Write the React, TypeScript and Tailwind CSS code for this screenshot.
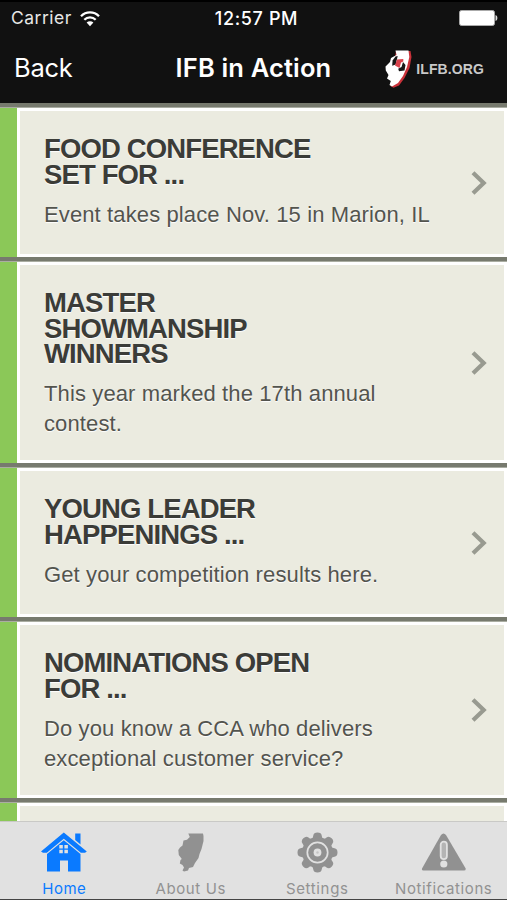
import React from 'react';

type Story = {
    lines: string[];
    body: string[];
    height: string;
};

const stories: Story[] = [
    { lines: ['FOOD CONFERENCE', 'SET FOR ...'], body: ['Event takes place Nov. 15 in Marion, IL'], height: 'h-[154px]' },
    { lines: ['MASTER', 'SHOWMANSHIP', 'WINNERS'], body: ['This year marked the 17th annual', 'contest.'], height: 'h-[206px]' },
    { lines: ['YOUNG LEADER', 'HAPPENINGS ...'], body: ['Get your competition results here.'], height: 'h-[154px]' },
    { lines: ['NOMINATIONS OPEN', 'FOR ...'], body: ['Do you know a CCA who delivers', 'exceptional customer service?'], height: 'h-[181px]' },
    { lines: [], body: [], height: 'h-[154px]' },
];

const WifiIcon = () => (
    <svg width="20" height="16" viewBox="0 0 20 16" fill="none" stroke="#fff" strokeWidth="2.3">
        <path d="M1 5.2C6 0.2 14 0.2 19 5.2" />
        <path d="M4.3 8.7C7.5 5.5 12.5 5.5 15.7 8.7" />
        <path d="M10 15.2L6.6 11.6C8.5 9.9 11.5 9.9 13.4 11.6Z" fill="#fff" stroke="none" />
    </svg>
);

const BatteryIcon = () => (
    <svg width="39" height="16" viewBox="0 0 39 16">
        <rect x="0.5" y="0.5" width="35" height="15" rx="2" fill="#fff" stroke="#aaa" />
        <path d="M36.5 5C39 5.5 39 10.5 36.5 11Z" fill="#ddd" />
    </svg>
);

const LogoIcon = () => (
    <svg width="27" height="38" viewBox="0 0 27 38">
        <path d="M11 1H25.5L26.5 7L24.5 18L19.5 28L14 35.5L8.5 37.8L5.5 36Z" fill="#c9323a" />
        <path d="M10.5 0.5H23.5L24.3 7L22 17L18 26L13 33L7 36.5L4.5 35L5.8 31L2 28.5L3.5 25L0.8 20.5L0.5 16.5L5 12L6 8L11.5 5Z" fill="#fff" />
        <path d="M10.5 6.5L12.7 6L10.7 14.5L7.2 15.8L7.6 10.5Z" fill="#181818" />
        <path d="M12 9.5L18.3 9L18.3 11.5L16 12.5L14.5 18L10 15.5Z" fill="#d9404a" />
        <path d="M18 12L20.5 15L19.5 20.5L14 21.3L13.2 18.8L16.5 17Z" fill="#181818" />
    </svg>
);

const HomeIcon = () => (
    <svg width="46" height="40" viewBox="0 0 46 40" fill="#0a7aff">
        <path d="M34.2 1.5H39.5V12.5L34.2 8Z" />
        <path d="M22.8 0.5L45.8 19.5L44 20.8H39.8L22.8 6.7L5.8 20.8H2L0 19.5Z" />
        <path fillRule="evenodd" d="M22.8 8.2L39.5 22V39.5H27V28.5H19V39.5H6V22ZM18.3 13V16.5H21.8V13ZM23.4 13V16.5H26.9V13ZM18.3 17.8V21.3H21.8V17.8ZM23.4 17.8V21.3H26.9V17.8Z" />
    </svg>
);

const StateIcon = () => (
    <svg width="26" height="39" viewBox="0 0 26 39" fill="#919191">
        <path d="M10.3 0.5H25L25.5 3L25.5 8L23.5 16L21.5 21L20.5 25L17 30L15 34L11 35L10 37.5L6 38.5L4.5 37.5L6 34.5L4.5 32L1.8 30.5L2.5 27L3.8 26L0.8 22L0.3 17L2 14.5L4.5 12.5L5.5 7.5L9 6.8L11.8 4Z" />
    </svg>
);

const GearIcon = () => (
    <svg width="41" height="41" viewBox="-20.5 -20.5 41 41" fill="#919191">
        <circle r="15.2" />
        {[0, 45, 90, 135, 180, 225, 270, 315].map((angle) => (
            <path key={angle} transform={`rotate(${angle})`} d="M-6 -13.5Q-4.2 -15 -4.2 -17Q-3.9 -20 0 -20Q3.9 -20 4.2 -17Q4.2 -15 6 -13.5Z" />
        ))}
        <circle r="10.2" fill="none" stroke="#e1e1e1" strokeWidth="1.7" />
        <circle r="3.9" fill="#e1e1e1" />
        <circle r="1.2" fill="#c4c4c4" />
    </svg>
);

const AlertIcon = () => (
    <svg width="46" height="38" viewBox="0 0 46 38">
        <path d="M20 2Q22.5 -1 25 2L44.7 35.5Q45 37.5 43 37.5H2.5Q0.5 37.5 1 35.5Z" fill="#919191" />
        <rect x="19.7" y="8.7" width="6.2" height="17.5" rx="3.1" fill="#b4b4b4" stroke="#e1e1e1" strokeWidth="1.8" />
        <circle cx="22.8" cy="31" r="3.6" fill="#e1e1e1" />
    </svg>
);

const tabs = [
    { label: 'Home', icon: <HomeIcon />, color: 'text-[#0a7aff]', spacing: 'tracking-[0.5px]' },
    { label: 'About Us', icon: <StateIcon />, color: 'text-[#929292]', spacing: 'tracking-[0.6px]' },
    { label: 'Settings', icon: <GearIcon />, color: 'text-[#929292]', spacing: 'tracking-[0.65px]' },
    { label: 'Notifications', icon: <AlertIcon />, color: 'text-[#929292]', spacing: 'tracking-[0.6px]' },
];

const StoryRow: React.FC<{ story: Story }> = ({ story }) => (
    <div className={`flex shrink-0 flex-col border-t-4 border-[#777a6e] ${story.height}`}>
        <div className="h-px shrink-0 bg-[#aaada2]" />
        <div className="flex min-h-0 flex-1">
            <div className="w-[17px] shrink-0 bg-[#8bc858]" />
            <div className="flex flex-1 items-center border-[3px] border-white bg-[#ebebe0] pr-[17px]">
                <div className="flex-1 self-start pt-[25px] pl-6 whitespace-nowrap [text-shadow:0_1px_1px_#fff]">
                    <h2 className="text-[27.5px] leading-[25.5px] font-bold tracking-[-0.87px] text-[#3b3c38]">
                        {story.lines.map((line) => (
                            <span key={line} className="block">{line}</span>
                        ))}
                    </h2>
                    <p className="mt-[12.5px] text-[22px] leading-[30px] tracking-[0.12px] text-[#53544e]">
                        {story.body.map((line) => (
                            <span key={line} className="block">{line}</span>
                        ))}
                    </p>
                </div>
                <svg className="shrink-0" width="16" height="24" viewBox="0 0 16 24" fill="none" stroke="#989a90" strokeWidth="4.2">
                    <path d="M2 1.7L12.7 12L2 22.3" />
                </svg>
            </div>
        </div>
    </div>
);

export default function App() {
    return (
        <div className="flex h-[900px] w-[507px] flex-col overflow-hidden border-t-2 border-b border-t-black border-b-[#444] bg-[#111] font-['Liberation_Sans',sans-serif]">
            <header className="h-[101px] shrink-0 font-[Inter,sans-serif] whitespace-nowrap text-white">
                <div className="grid h-8 grid-cols-3 items-center pr-[9px] pl-[11px]">
                    <div className="flex items-center gap-2 pt-px text-[17.5px] text-[#e8e8e8]">
                        <span className="tracking-[0.5px]">Carrier</span>
                        <WifiIcon />
                    </div>
                    <span className="justify-self-center pl-1 text-[18px] font-medium tracking-[0.65px]">12:57 PM</span>
                    <div className="flex justify-end">
                        <BatteryIcon />
                    </div>
                </div>
                <div className="grid h-[69px] grid-cols-3 items-center pr-[23px] pl-[14px]">
                    <span className="text-[25.5px] tracking-[-0.25px]">Back</span>
                    <h1 className="justify-self-center pl-[9px] text-[25.5px] font-semibold tracking-[0.15px]">IFB in Action</h1>
                    <div className="flex items-center justify-end gap-1">
                        <LogoIcon />
                        <span className="pt-0.5 font-['Liberation_Sans',sans-serif] text-[14px] font-bold tracking-[0.1px] text-[#c9c9c9]">ILFB.ORG</span>
                    </div>
                </div>
            </header>
            <main className="flex min-h-0 flex-1 flex-col overflow-hidden">
                {stories.map((story, i) => (
                    <StoryRow key={i} story={story} />
                ))}
            </main>
            <nav className="grid h-[78px] shrink-0 grid-cols-4 border-t border-[#c9c9c6] bg-[#e1e1e1] pl-px font-[Inter,sans-serif]">
                {tabs.map((tab) => (
                    <div key={tab.label} className={`flex flex-col items-center ${tab.color}`}>
                        <div className="flex h-[60px] items-center justify-center">{tab.icon}</div>
                        <span className={`-mt-[3px] text-[15px] leading-[20px] whitespace-nowrap ${tab.spacing}`}>{tab.label}</span>
                    </div>
                ))}
            </nav>
        </div>
    );
}
